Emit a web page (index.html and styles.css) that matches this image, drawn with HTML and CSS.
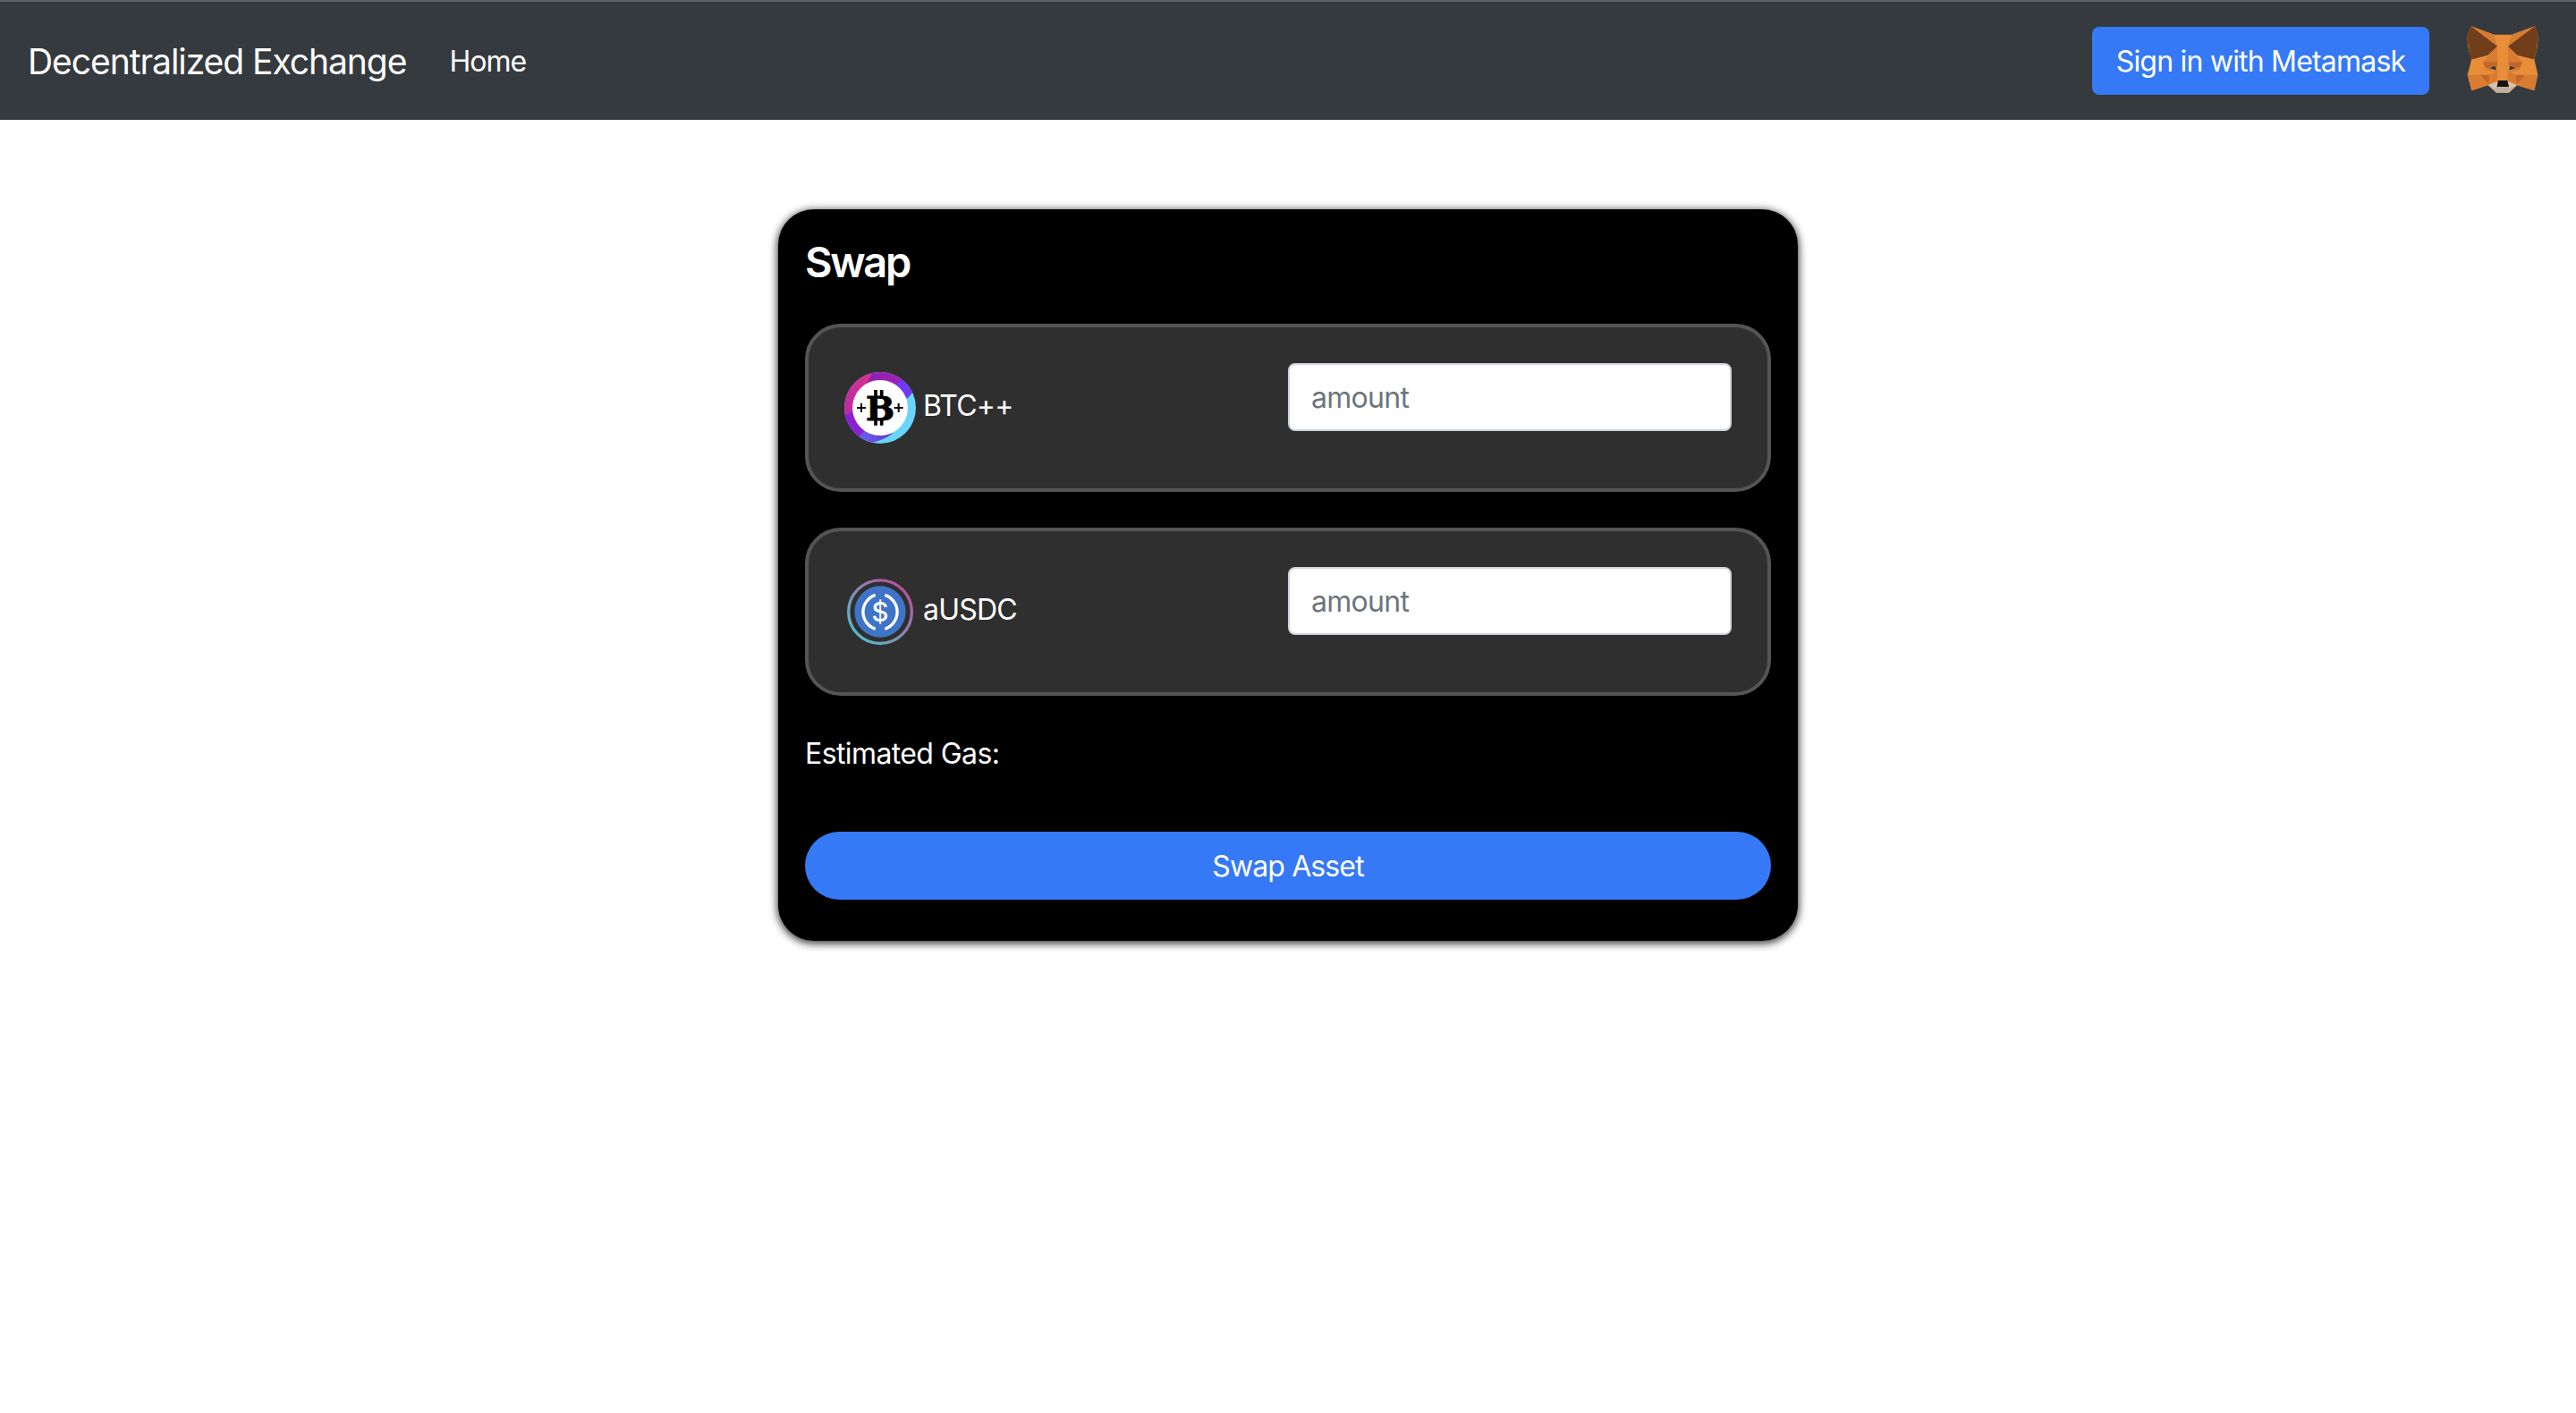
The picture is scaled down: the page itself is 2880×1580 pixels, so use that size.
FILE: index.html
```html
<!DOCTYPE html>
<html lang="en">
<head>
<meta charset="utf-8">
<title>Decentralized Exchange</title>
<link rel="stylesheet" href="styles.css">
</head>
<body>
<nav class="navbar">
  <a class="brand">Decentralized Exchange</a>
  <a class="nav-link">Home</a>
  <button class="btn sign-in">Sign in with Metamask</button>
  <svg class="fox" viewBox="54 41 240 225">
    <path fill="#e88e38" d="M68 42 145 70H205L282 42 294 78 288 122 280 152 292 205 280 258 222 240 195 265H153L125 240 70 258 56 205 70 152 60 122 54 78Z"/>
    <path fill="#d87c31" d="M68 42 145 70 156 109ZM282 42 205 70 192 109ZM156 109 107 162H157ZM192 109 240 162H193ZM56 205H130L125 240 70 258ZM292 205H218L222 240 280 258Z"/>
    <path fill="#d87c31" d="M107 162 118 190 150 194 157 162ZM240 162 230 190 198 194 193 162ZM130 205 157 190V225L127 239ZM218 205 191 190V225L221 239Z"/>
    <path fill="#c0672b" d="M107 162H157L154 180 118 182ZM240 162H193L196 180 230 182ZM98 205H130L127 236ZM250 205H218L221 236Z"/>
    <path fill="#703e1b" d="M68 42 156 109 125 139 73 153 62 144 66 138 60 133 64 127 59 122 61 115 54 78ZM282 42 192 109 223 139 276 153 286 144 282 138 288 133 284 127 289 122 287 115 294 78Z"/>
    <path fill="#243447" d="M131 183 148 176 153 189ZM217 183 200 176 195 189Z"/>
    <path fill="#d7c1b3" d="M125 240 157 226 153 250 153 258ZM222 240 191 226 195 250 195 258Z"/>
    <path fill="#bfae9e" d="M125 240 153 252 157 245H191L195 252 222 240 195 265H153Z"/>
    <path fill="#141414" d="M159 224H190L195 245H155Z"/>
  </svg>
</nav>
<main class="card">
  <h4 class="title">Swap</h4>
  <section class="asset">
    <div class="token">
      <svg class="token-icon" viewBox="27 33 240 240">
        <defs>
          <clipPath id="ring"><circle cx="147" cy="153" r="120"/></clipPath>
          <linearGradient id="pink" x1="0" y1="1" x2="1" y2="0"><stop offset="0" stop-color="#b82aa5"/><stop offset="1" stop-color="#de318b"/></linearGradient>
          <linearGradient id="violet"><stop offset="0" stop-color="#8b1fb2"/><stop offset="1" stop-color="#a523b8"/></linearGradient>
          <linearGradient id="indigo"><stop offset="0" stop-color="#6a62ef"/><stop offset="1" stop-color="#6138d2"/></linearGradient>
        </defs>
        <g clip-path="url(#ring)">
          <path fill="#68d6fc" d="M27 33H267V273H27Z"/>
          <path fill="url(#violet)" d="M110 20H250L220 66 200 90 90 80Z"/>
          <path fill="url(#pink)" d="M20 20H128L100 74 55 168 20 181Z"/>
          <path fill="#7138f5" d="M196 76 236 48 267 90 238 122Z"/>
          <path fill="#8b20d3" d="M20 181 56 166 100 230 74 258 20 250Z"/>
          <path fill="url(#indigo)" d="M74 252 94 230 190 238C165 258 145 264 118 270L100 275Z"/>
        </g>
        <circle cx="147" cy="153" r="93" fill="#fff"/>
        <path stroke="#000" stroke-width="11" d="M132 93V115M152 93V115M132 190V212M152 190V212"/>
        <path stroke="#000" stroke-width="6" d="M69 153H99M84 138V168M194 153H224M209 138V168"/>
        <text class="coin-b" x="147" y="194" text-anchor="middle">B</text>
      </svg>
      <span class="token-name">BTC++</span>
    </div>
    <input class="amount" placeholder="amount">
  </section>
  <section class="asset">
    <div class="token">
      <svg class="token-icon" viewBox="27 27 240 240">
        <defs>
          <linearGradient id="rim" x1=".15" y1=".85" x2=".85" y2=".15"><stop offset="0" stop-color="#58b8c8"/><stop offset="1" stop-color="#b5559f"/></linearGradient>
        </defs>
        <circle cx="147" cy="147.500" r="106" fill="none" stroke="url(#rim)" stroke-width="10"/>
        <circle cx="147" cy="147" r="86" fill="#3f74c8"/>
        <path fill="none" stroke="#fff" stroke-width="10" d="M131 91A60 60 0 0 0 131 205M163 91A60 60 0 0 1 163 205"/>
        <text class="coin-s" x="147" y="179" text-anchor="middle">$</text>
      </svg>
      <span class="token-name">aUSDC</span>
    </div>
    <input class="amount" placeholder="amount">
  </section>
  <p class="gas">Estimated Gas:</p>
  <button class="btn swap">Swap Asset</button>
</main>
</body>
</html>
```
FILE: styles.css
```css
* { box-sizing: border-box; }
body {
  min-height: 100vh;
  margin: 0;
  background: #fff;
  color: #fff;
  font: 430 32px/48px Inter, sans-serif;
}
.navbar {
  display: flex;
  align-items: center;
  height: 134px;
  padding: 0 42px 0 31px;
  border-top: 2px solid #5f6066;
  background: #353a3e;
}
.brand {
  margin-right: 48px;
  padding-top: 2px;
  font-size: 39px;
  line-height: 60px;
  letter-spacing: -1.05px;
}
.nav-link { padding-top: 2px; letter-spacing: -1px; }
.btn {
  height: 76px;
  padding: 2px 26px 0;
  border: 0;
  border-radius: 8px;
  background: #3579f6;
  color: #fff;
  font: inherit;
  letter-spacing: -0.88px;
}
.sign-in { margin-left: auto; width: 377px; padding: 2px 0 0; letter-spacing: -0.8px; }
.fox { width: 80px; height: 75px; margin: -4px 0 0 42px; }
.card {
  width: 1140px;
  height: 818px;
  margin: 100px auto 0;
  padding: 30px;
  border-radius: 40px;
  background: #000;
  box-shadow: 0 2px 10px 1px rgba(0, 0, 0, .8);
}
.title {
  margin: 0 0 40px;
  font-size: 47px;
  font-weight: 600;
  line-height: 58px;
  letter-spacing: -2.3px;
}
.asset {
  display: flex;
  justify-content: space-between;
  height: 188px;
  margin-bottom: 40px;
  padding: 40px;
  border: 4px solid #555;
  border-radius: 40px;
  background: #2f2f2f;
}
.token { display: flex; padding-top: 10px; gap: 8px; }
.token-icon { width: 80px; height: 80px; }
.token-name { padding-top: 14px; letter-spacing: -0.8px; }
.coin-b { font: bold 114px "DejaVu Serif", serif; stroke: #000; stroke-width: 3px; }
.coin-s { font: 500 88px Inter, sans-serif; fill: #fff; }
.amount {
  width: 496px;
  height: 76px;
  padding: 0 24px;
  border: 2px solid #ced4da;
  border-radius: 8px;
  background: #fff;
  font: inherit;
  letter-spacing: -0.7px;
}
.amount::placeholder { color: #6c757d; opacity: 1; }
.gas { margin: 0 0 63px; padding-top: 1px; letter-spacing: -0.6px; }
.swap { display: block; width: 100%; border-radius: 40px; }
```
